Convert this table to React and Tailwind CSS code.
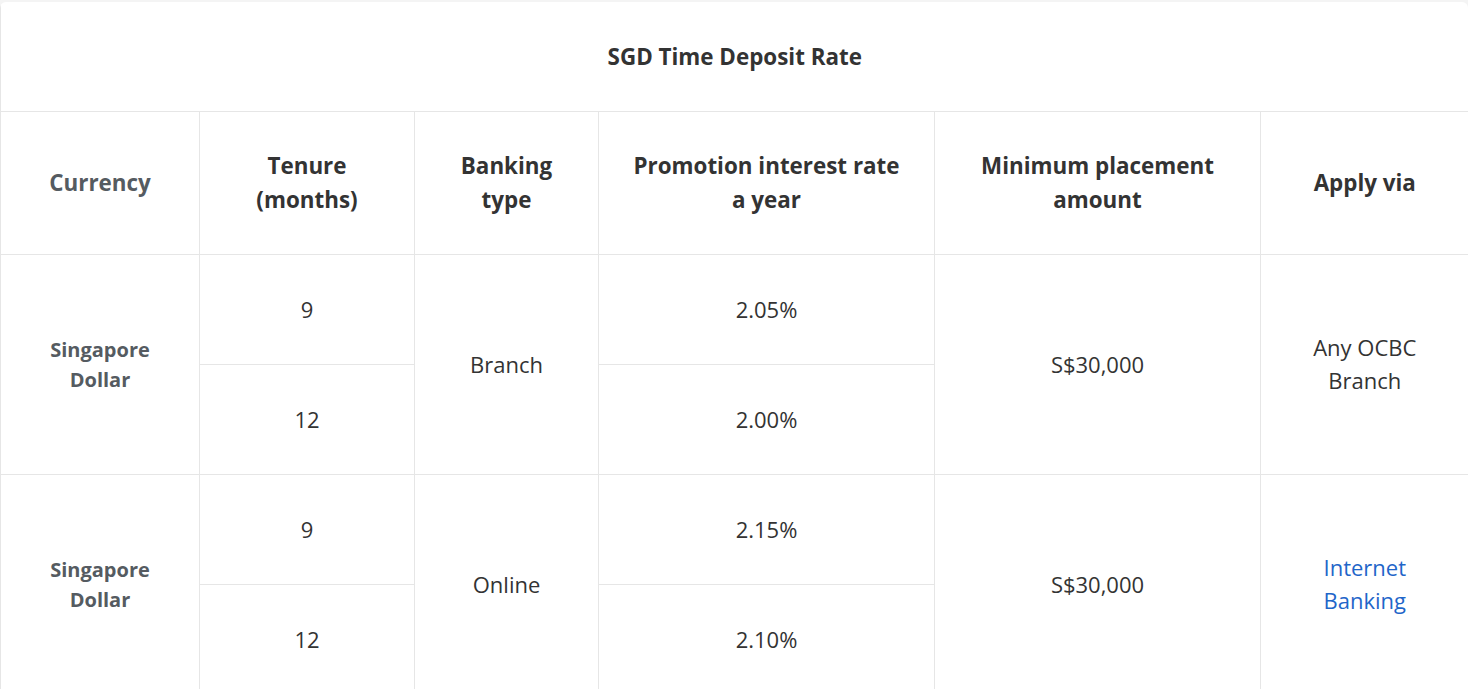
export default function App() {
  const cell =
    "border border-[#e6e6e6] text-center align-middle text-[22px] leading-[33px] text-[#333]";
  const head =
    "border border-[#e6e6e6] text-center align-middle text-[22.4px] leading-[34px] font-bold text-[#333]";
  const currency =
    "border border-[#e6e6e6] text-center align-middle text-[20px] leading-[30px] font-bold text-[#555b61] pt-[1px]";

  const groups = [
    {
      type: "Branch",
      rates: ["2.05%", "2.00%"],
      via: (
        <span>
          Any OCBC
          <br />
          Branch
        </span>
      ),
    },
    {
      type: "Online",
      rates: ["2.15%", "2.10%"],
      via: (
        <a href="#" className="text-[#1f66c9]">
          Internet
          <br />
          Banking
        </a>
      ),
    },
  ];

  return (
    <div
      className="min-h-screen bg-[#f4f4f4] pt-[2px] overflow-hidden"
      style={{ fontFamily: '"Open Sans", "Liberation Sans", sans-serif' }}
    >
      <div className="bg-white rounded-t-[6px] w-[1468px] overflow-hidden">
        <table className="w-[1468px] table-fixed border-collapse">
          <colgroup>
            <col className="w-[199px]" />
            <col className="w-[215px]" />
            <col className="w-[184px]" />
            <col className="w-[336px]" />
            <col className="w-[326px]" />
            <col className="w-[208px]" />
          </colgroup>
          <thead>
            <tr className="h-[109px]">
              <th
                colSpan={6}
                className="border-b border-l border-[#e6e6e6] text-center align-middle text-[22.4px] font-bold text-[#333] pt-[1px]"
              >
                SGD Time Deposit Rate
              </th>
            </tr>
            <tr className="h-[143px]">
              <th className={head + " text-[#555b61]"}>Currency</th>
              <th className={head}>
                Tenure
                <br />
                (months)
              </th>
              <th className={head}>
                Banking
                <br />
                type
              </th>
              <th className={head}>
                Promotion interest rate
                <br />
                a year
              </th>
              <th className={head}>
                Minimum placement
                <br />
                amount
              </th>
              <th className={head + " border-r-0"}>Apply via</th>
            </tr>
          </thead>
          <tbody>
            {groups.map((g) => (
              <>
                <tr key={g.type + "a"} className="h-[110px]">
                  <td rowSpan={2} className={currency}>
                    Singapore
                    <br />
                    Dollar
                  </td>
                  <td className={cell}>9</td>
                  <td rowSpan={2} className={cell}>
                    {g.type}
                  </td>
                  <td className={cell}>{g.rates[0]}</td>
                  <td rowSpan={2} className={cell}>
                    S$30,000
                  </td>
                  <td rowSpan={2} className={cell + " border-r-0"}>
                    {g.via}
                  </td>
                </tr>
                <tr key={g.type + "b"} className="h-[110px]">
                  <td className={cell}>12</td>
                  <td className={cell}>{g.rates[1]}</td>
                </tr>
              </>
            ))}
          </tbody>
        </table>
      </div>
    </div>
  );
}
